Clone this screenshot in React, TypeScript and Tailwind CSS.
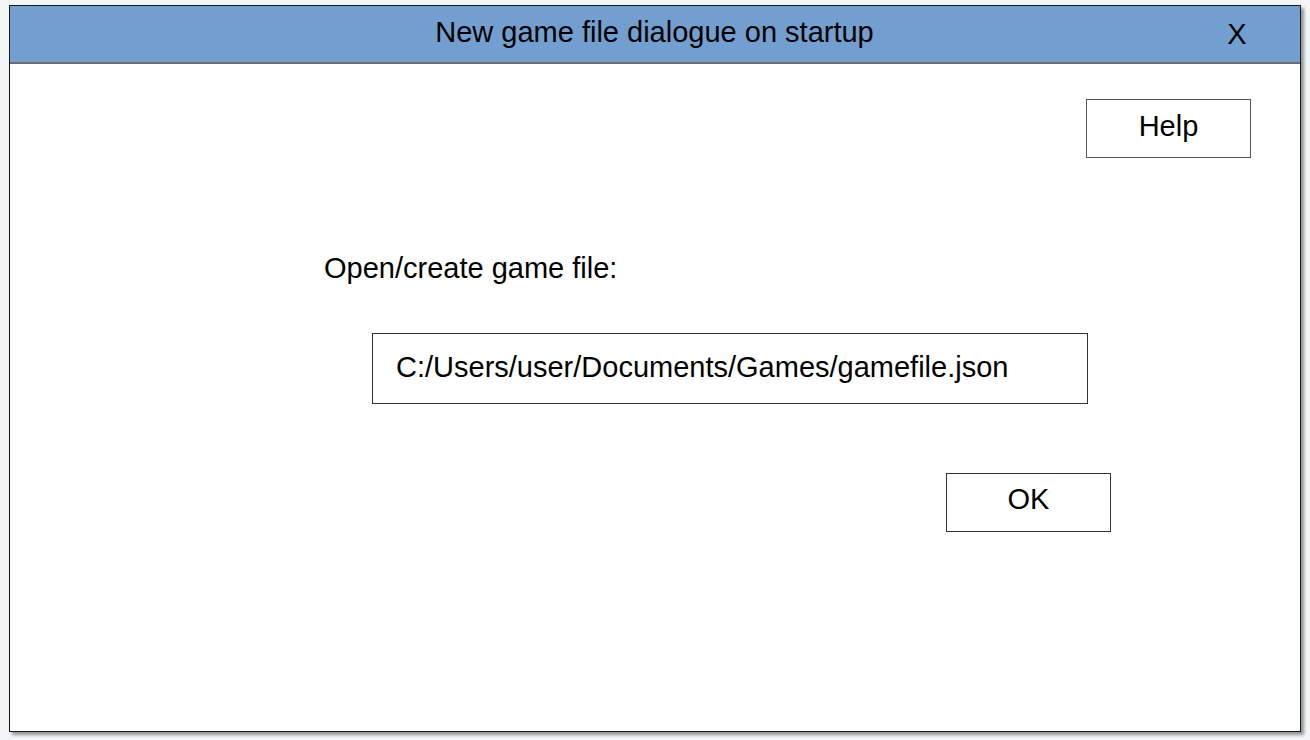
import React from 'react';

const font = { fontFamily: '"Liberation Sans", Arial, sans-serif' };

const App: React.FC = () => {
  return (
    <div className="w-[1310px] h-[740px] bg-[#f4f5f7] pl-[9px] pt-[5px]" style={font}>
      {/* Dialog window */}
      <div className="w-[1292px] h-[727px] bg-white border border-[#1a1a1a] shadow-[3px_3px_3px_rgba(0,0,0,0.4)] flex flex-col">
        {/* Title bar */}
        <div className="h-[58px] bg-[#729fcf] border-b-2 border-[#6b6f73] flex items-center text-[29px] text-black">
          <div className="flex-1 text-center pl-[92px] pb-[3px]">New game file dialogue on startup</div>
          <div className="w-[60px] mr-[33px] text-center pt-[2px]">X</div>
        </div>

        {/* Body */}
        <div className="flex-1 flex flex-col text-[29px] text-black">
          <div className="flex justify-end mt-[35px] mr-[49px]">
            <button className="w-[165px] h-[59px] border border-[#555] bg-white pb-[4px]">Help</button>
          </div>

          <div className="ml-[314px] mt-[93px] leading-[34px]">Open/create game file:</div>

          <div className="ml-[362px] mt-[48px] w-[716px] h-[71px] border border-[#333] flex items-center pl-[23px] pb-[2px]">
            C:/Users/user/Documents/Games/gamefile.json
          </div>

          <div className="ml-[936px] mt-[69px]">
            <button className="w-[165px] h-[59px] border border-[#333] bg-white pb-[6px]">OK</button>
          </div>
        </div>
      </div>
    </div>
  );
};

export default App;
